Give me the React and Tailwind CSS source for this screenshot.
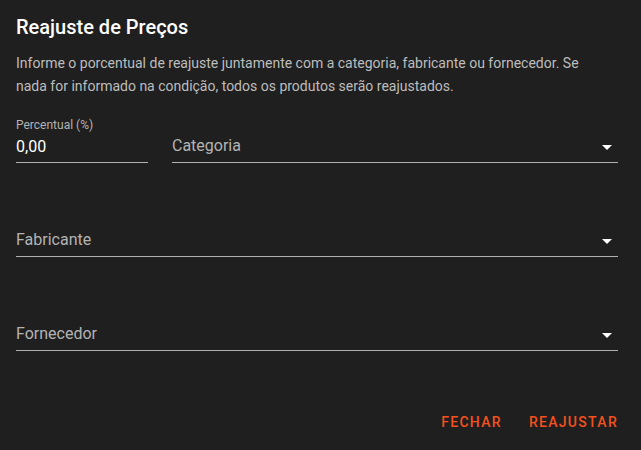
import React, { useState } from "react";

const Arrow = () => (
  <svg width="24" height="24" viewBox="0 0 24 24" className="shrink-0 -mr-[1px] -mt-[1px]">
    <path d="M7 10l5 5 5-5z" fill="#ffffff" />
  </svg>
);

const SelectField = ({ label, className = "" }) => (
  <div className={"flex items-center h-[30px] border-b border-[#b0b0b0] " + className}>
    <span className="flex-1 text-[16px] leading-[20px] text-[#b3b3b3] pb-[4px]">{label}</span>
    <Arrow />
  </div>
);

const App = () => {
  const [percent, setPercent] = useState("0,00");

  return (
    <div
      className="w-[641px] h-[450px] bg-[#1f1f1f] text-white pl-4 pr-[23px] flex flex-col"
      style={{ fontFamily: "Roboto, 'Liberation Sans', sans-serif" }}
    >
      <h2 className="mt-[11px] text-[20px] leading-[32px] font-medium">Reajuste de Preços</h2>
      <p className="mt-[9px] text-[14px] leading-[23px] text-[#bdbdbd] pr-2">
        Informe o porcentual de reajuste juntamente com a categoria, fabricante ou fornecedor. Se nada for informado na condição, todos os produtos serão reajustados.
      </p>

      {/* percentual + categoria */}
      <div className="mt-[19px] flex items-end gap-6">
        <div className="w-[132px]">
          <div className="text-[12px] leading-[16px] text-[#b3b3b3]">Percentual (%)</div>
          <div className="h-[30px] border-b border-[#b0b0b0] flex items-center">
            <input
              value={percent}
              onChange={(e) => setPercent(e.target.value)}
              className="w-full bg-transparent outline-none text-[16px] leading-[20px] text-white -mt-[1px]"
            />
          </div>
        </div>
        <SelectField label="Categoria" className="flex-1" />
      </div>

      <SelectField label="Fabricante" className="mt-[64px]" />
      <SelectField label="Fornecedor" className="mt-[64px]" />

      <div className="mt-auto mb-[18px] flex justify-end gap-[27px]">
        <button className="text-[14px] leading-[20px] font-medium tracking-[1.3px] text-[#f4511e]">FECHAR</button>
        <button className="text-[14px] leading-[20px] font-medium tracking-[1.3px] text-[#f4511e]">REAJUSTAR</button>
      </div>
    </div>
  );
};

export default App;
